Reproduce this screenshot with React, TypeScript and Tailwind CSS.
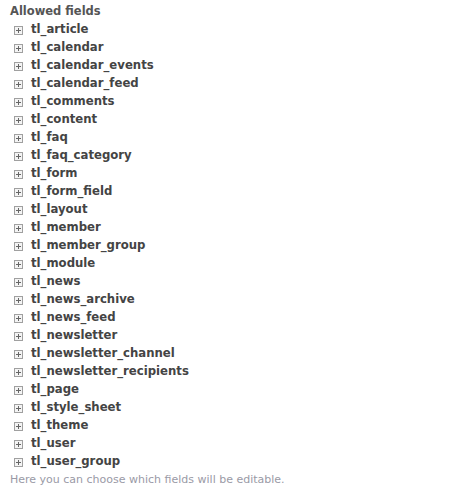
import React from "react";

const items = [
  "tl_article","tl_calendar","tl_calendar_events","tl_calendar_feed","tl_comments","tl_content","tl_faq","tl_faq_category","tl_form","tl_form_field","tl_layout","tl_member","tl_member_group","tl_module","tl_news","tl_news_archive","tl_news_feed","tl_newsletter","tl_newsletter_channel","tl_newsletter_recipients","tl_page","tl_style_sheet","tl_theme","tl_user","tl_user_group",
];

function PlusBox() {
  return (
    <svg width="9" height="9" viewBox="0 0 9 9" className="shrink-0">
      <rect x="0.5" y="0.5" width="8" height="8" fill="#f4f4f4" stroke="#a0a0a0" />
      <rect x="2" y="4" width="5" height="1" fill="#666" />
      <rect x="4" y="2" width="1" height="5" fill="#666" />
    </svg>
  );
}

export default function App() {
  return (
    <div className="w-[450px] h-[490px] bg-white pl-[10px] pt-[4px]" style={{ fontFamily: '"DejaVu Sans", Verdana, sans-serif' }}>
      <div className="text-[11.5px] font-bold text-[#555] leading-[15px]">Allowed fields</div>
      <div className="flex flex-col pl-[4px] pt-[2px]">
        {items.map((it) => (
          <div key={it} className="flex items-center gap-[8px] h-[18px]">
            <PlusBox />
            <span className="text-[11.7px] font-bold text-[#444]">{it}</span>
          </div>
        ))}
      </div>
      <div className="text-[11px] text-[#9a9aa6] mt-[2px] leading-[14px]">Here you can choose which fields will be editable.</div>
    </div>
  );
}
